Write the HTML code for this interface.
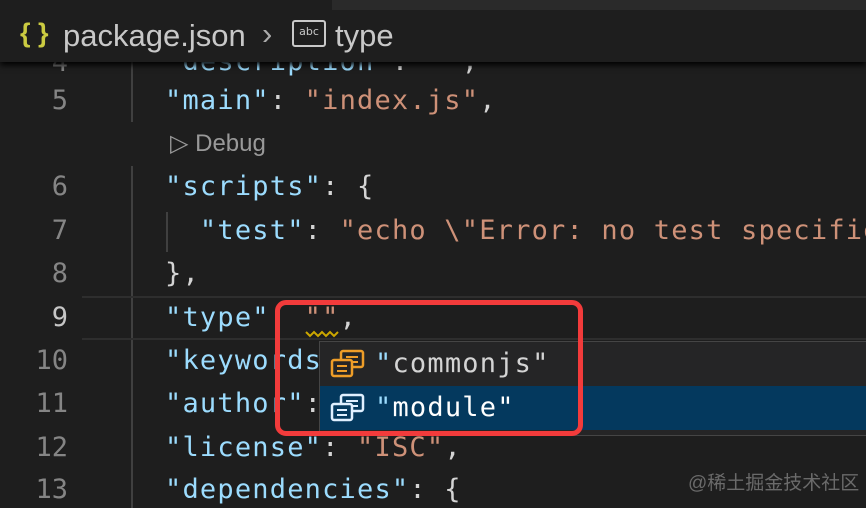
<!DOCTYPE html>
<html><head><meta charset="utf-8"><style>
html,body{margin:0;width:866px;height:508px;overflow:hidden}
body{background:#1e1e1e;position:relative;font-family:"DejaVu Sans Mono","Liberation Mono",monospace}
#wrap{position:absolute;left:0;top:0;width:866px;height:508px;overflow:hidden}
.hdr{position:absolute;left:0;top:0;width:866px;height:62px;background:#1e1e1e;box-shadow:0 3px 6px #000;z-index:3;font-family:"Liberation Sans",sans-serif;font-size:31px;color:#c8c8c8}
.ln{position:absolute;left:0;width:68px;text-align:right;font-size:27px;color:#858585;height:44px;line-height:44px}
.cd{position:absolute;left:165px;font-size:27px;letter-spacing:1.2px;color:#d4d4d4;height:44px;line-height:44px;white-space:pre}
.k{color:#9cdcfe}.s{color:#ce9178}
.guide{position:absolute;width:2px;background:#404040}
</style></head><body><div id="wrap">
<div class="hdr">
<div style="position:absolute;left:332px;top:0;width:534px;height:10px;background:#2a2a2a"></div>
<span style="position:absolute;left:20px;top:18px;color:#cbcb41;font-weight:bold;font-size:27px">{ }</span>
<span style="position:absolute;left:63px;top:18px">package.json</span>
<span style="position:absolute;left:262px;top:16px;color:#aaa">›</span>
<div style="position:absolute;left:292px;top:20px;width:30px;height:23px;border:2px solid #c8c8c8;border-radius:3px;font-size:11px;line-height:20px;text-align:center;font-family:'DejaVu Sans',sans-serif">abc</div>
<span style="position:absolute;left:335px;top:18px">type</span>
</div>
<div class="guide" style="left:131px;top:62px;height:60px"></div>
<div class="guide" style="left:131px;top:166px;height:342px"></div>
<div class="guide" style="left:166px;top:212px;height:40px"></div>
<div style="position:absolute;left:82px;top:296px;width:784px;height:44px;border-top:2px solid #2e2e2e;border-bottom:2px solid #2e2e2e;box-sizing:border-box"></div>
<div class="ln" style="top:41px">4</div><div class="cd" style="top:40px"><span class="k">"description"</span>: <span class="s">""</span>,</div>
<div class="ln" style="top:79px">5</div><div class="cd" style="top:79px"><span class="k">"main"</span>: <span class="s">"index.js"</span>,</div>
<div style="position:absolute;left:170px;top:129px;font-family:'Liberation Sans',sans-serif;font-size:24px;color:#999">▷ Debug</div>
<div class="ln" style="top:165px">6</div><div class="cd" style="top:165px"><span class="k">"scripts"</span>: {</div>
<div class="ln" style="top:209px">7</div><div class="cd" style="top:209px">  <span class="k">"test"</span>: <span class="s">"echo \"Error: no test specified</span></div>
<div class="ln" style="top:252px">8</div><div class="cd" style="top:252px">},</div>
<div class="ln" style="top:296px;color:#c6c6c6">9</div><div class="cd" style="top:296px"><span class="k">"type"</span>: <span class="s">""</span>,</div>
<svg style="position:absolute;left:305px;top:330px" width="34" height="8"><path d="M1 2 L5 6 L9 2 L13 6 L17 2 L21 6 L25 2 L29 6 L33 2" fill="none" stroke="#cca700" stroke-width="2"/></svg>
<div class="ln" style="top:339px">10</div><div class="cd" style="top:339px"><span class="k">"keywords"</span>: [],</div>
<div class="ln" style="top:382px">11</div><div class="cd" style="top:382px"><span class="k">"author"</span>: <span class="s">""</span>,</div>
<div class="ln" style="top:426px">12</div><div class="cd" style="top:426px"><span class="k">"license"</span>: <span class="s">"ISC"</span>,</div>
<div class="ln" style="top:468px">13</div><div class="cd" style="top:468px"><span class="k">"dependencies"</span>: {</div>
<div style="position:absolute;left:319px;top:341px;width:547px;height:95px;background:#252526;border:1px solid #454545;border-right:none;box-sizing:border-box;font-size:27px;letter-spacing:1.2px">
<div style="position:absolute;left:0;top:44px;width:547px;height:44px;background:#04395e"></div>
<svg style="position:absolute;left:10px;top:7px" width="36" height="30"><rect x="11" y="2" width="22" height="16" rx="2" fill="#252526" stroke="#ee9d28" stroke-width="2.5"/><path d="M16 8h12M16 13h12" stroke="#ee9d28" stroke-width="2"/><rect x="2" y="11" width="20" height="16" rx="2" fill="#252526" stroke="#ee9d28" stroke-width="2.5"/><path d="M7 17h10M7 22h10" stroke="#ee9d28" stroke-width="2"/></svg>
<div style="position:absolute;left:55px;top:0;line-height:44px;color:#d4d4d4"><span class="k">"</span>commonjs"</div>
<svg style="position:absolute;left:10px;top:51px" width="36" height="30"><rect x="11" y="2" width="22" height="16" rx="2" fill="#04395e" stroke="#e0f0ff" stroke-width="2.5"/><path d="M16 8h12M16 13h12" stroke="#e0f0ff" stroke-width="2"/><rect x="2" y="11" width="20" height="16" rx="2" fill="#04395e" stroke="#e0f0ff" stroke-width="2.5"/><path d="M7 17h10M7 22h10" stroke="#e0f0ff" stroke-width="2"/></svg>
<div style="position:absolute;left:55px;top:44px;line-height:44px;color:#fff"><span class="k">"</span>module"</div>
</div>
<div style="position:absolute;left:275px;top:300px;width:308px;height:136px;border:5px solid #f23b3b;border-radius:11px;box-sizing:border-box;z-index:4"></div>
<div style="position:absolute;left:688px;top:468px;font-family:'Liberation Sans','Noto Sans CJK SC',sans-serif;font-size:19px;color:#6a6a6a">@稀土掘金技术社区</div>
</div></body></html>
